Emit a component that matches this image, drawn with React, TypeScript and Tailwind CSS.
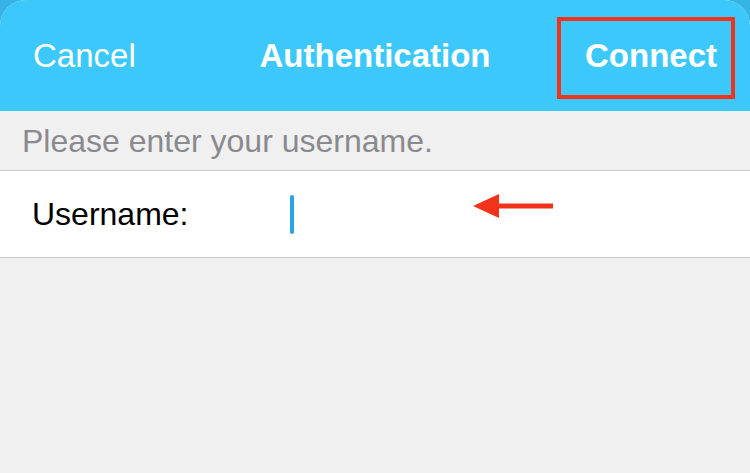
import React from "react";

export default function App() {
  return (
    <div
      className="relative w-[750px] h-[473px] overflow-hidden bg-[#36b4e6] flex flex-col"
      style={{ fontFamily: '"Liberation Sans", Arial, sans-serif' }}
    >
      <div className="flex flex-col flex-1 rounded-t-[26px] overflow-hidden bg-[#f0f0f0]">
        <header className="h-[111px] shrink-0 bg-[#3dc8fb] flex items-center justify-between pl-[33px] pr-[33px] text-white text-[33px]">
          <span className="w-[180px]">Cancel</span>
          <span className="font-bold">Authentication</span>
          <span className="w-[180px] text-right font-bold">Connect</span>
        </header>
        <div className="h-[60px] shrink-0 flex items-center pl-[22px] text-[32px] text-[#8a8a8e] border-b border-[#c8c8cb]">
          Please enter your username.
        </div>
        <div className="h-[87px] shrink-0 bg-white flex items-center border-b border-[#c8c8cb]">
          <span className="pl-[32px] w-[290px] text-[32px] text-black">Username:</span>
          <span className="w-[4px] h-[39px] bg-[#2aa4dc] rounded-[2px]" />
        </div>
        <div className="flex-1" />
      </div>

      <div className="absolute left-[557px] top-[17px] w-[178px] h-[82px] border-[4px] border-[#f2331c]" />
      <svg className="absolute left-[470px] top-[192px]" width="90" height="30" viewBox="0 0 90 30">
        <polygon points="3,14 29,2 29,26" fill="#f2331c" />
        <rect x="26" y="11.5" width="57" height="5" fill="#f2331c" />
      </svg>
    </div>
  );
}
